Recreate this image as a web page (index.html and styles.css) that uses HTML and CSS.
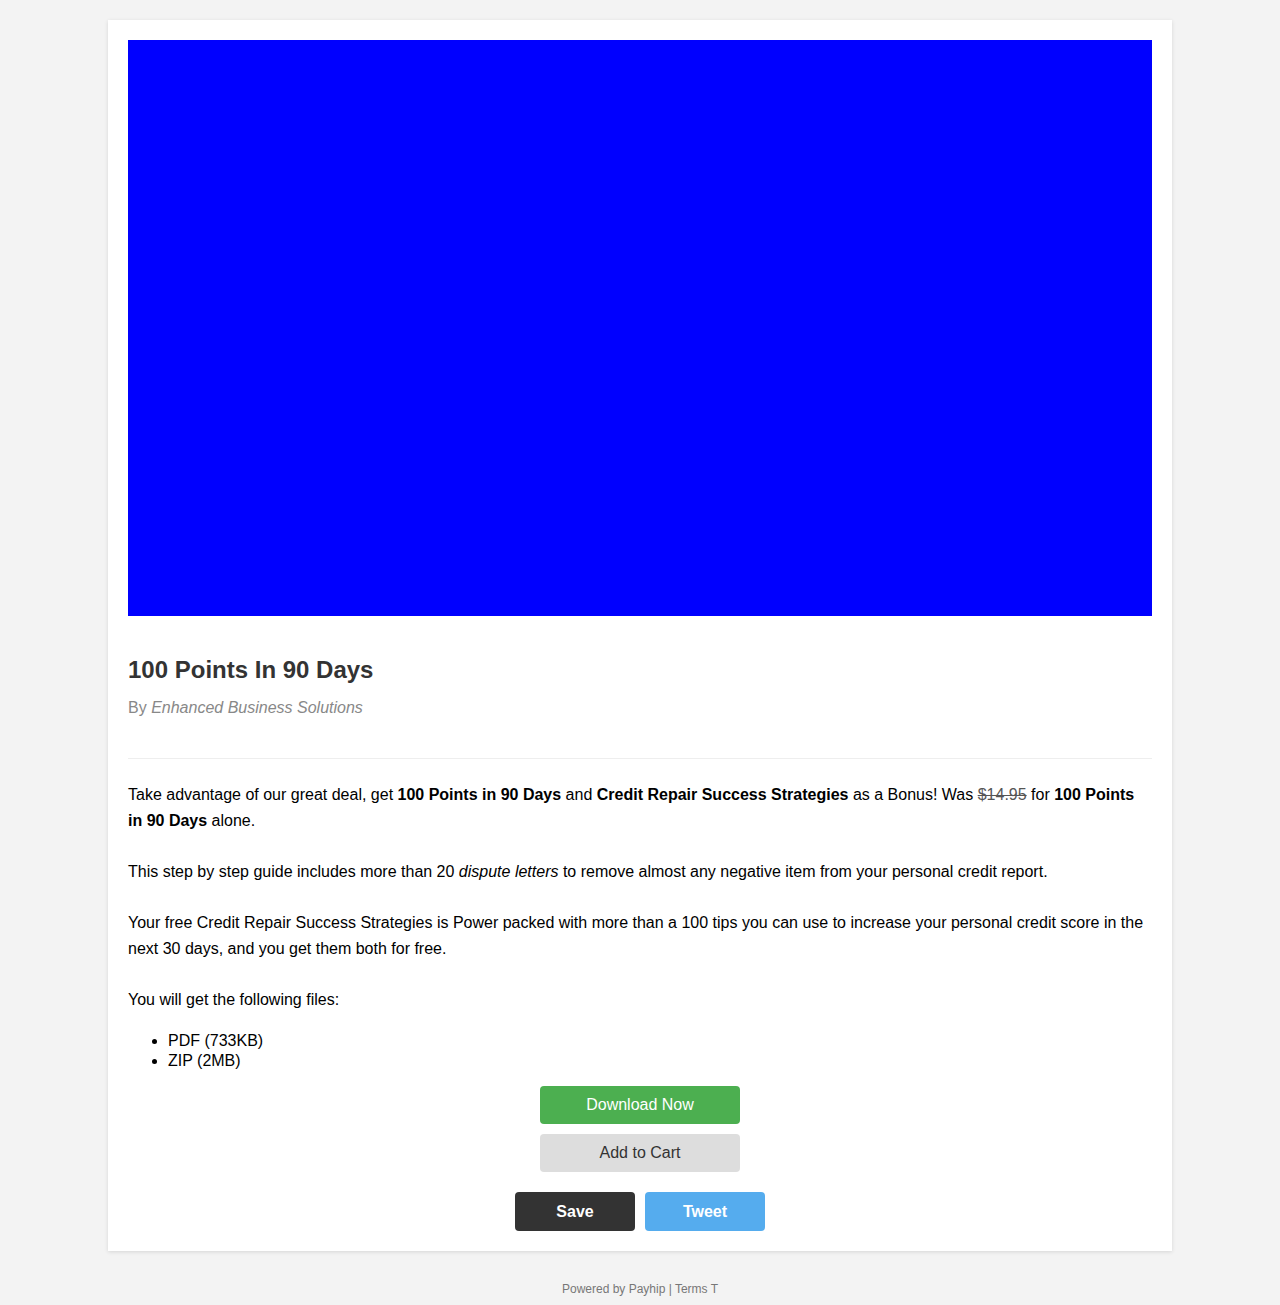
FILE: index.html
```html
<!DOCTYPE html>
<html>
<head>
<meta charset="utf-8">
<link rel="stylesheet" href="styles.css">
</head>
<body>
<div class="page">
  <div class="card">
    <div class="cover"></div>
    <div class="head">
      <h1 class="title">100 Points In 90 Days</h1>
      <div class="byline">By <em>Enhanced Business Solutions</em></div>
    </div>
    <div class="desc">
      <p>Take advantage of our great deal, get <strong>100 Points in 90 Days</strong> and <strong>Credit Repair Success Strategies</strong> as a Bonus! Was <s class="old">$14.95</s> for <strong>100 Points in 90 Days</strong> alone.</p>
      <p>This step by step guide includes more than 20 <em>dispute letters</em> to remove almost any negative item from your personal credit report.</p>
      <p>Your free Credit Repair Success Strategies is Power packed with more than a 100 tips you can use to increase your personal credit score in the next 30 days, and you get them both for free.</p>
      <p class="files-intro">You will get the following files:</p>
      <ul class="files">
        <li>PDF (733KB)</li>
        <li>ZIP (2MB)</li>
      </ul>
    </div>
    <div class="actions">
      <a class="btn btn-buy">Download Now</a>
      <a class="btn btn-cart">Add to Cart</a>
    </div>
    <div class="share">
      <a class="sbtn sbtn-save">Save</a>
      <a class="sbtn sbtn-tweet">Tweet</a>
    </div>
  </div>
  <div class="footer">Powered by Payhip | Terms T</div>
</div>
</body>
</html>
```

FILE: styles.css
```css
html, body {
  margin: 0;
  padding: 0;
  background: #f3f3f3;
  font-family: "Liberation Sans", Arial, sans-serif;
  color: #000;
}
.page {
  padding-top: 20px;
}
.card {
  width: 1024px;
  margin: 0 auto;
  background: #fff;
  padding: 20px;
  box-shadow: 0 1px 4px rgba(0, 0, 0, 0.12);
}
.cover {
  height: 576px;
  background: #0000ff;
}
.head {
  padding-top: 39px;
  padding-bottom: 40px;
  border-bottom: 1px solid #eee;
}
.title {
  margin: 0;
  font-size: 24px;
  line-height: 30px;
  font-weight: bold;
  color: #333;
}
.byline {
  margin-top: 13px;
  font-size: 16px;
  line-height: 20px;
  color: #888;
}
.byline em {
  font-style: italic;
}
.desc {
  padding-top: 23px;
  font-size: 16px;
  line-height: 26px;
}
.desc p {
  margin: 0 0 25px;
}
.desc p.files-intro {
  margin-bottom: 18px;
}
.old {
  color: #555;
}
.files {
  margin: 0;
  padding-left: 40px;
  line-height: 20px;
  font-size: 16px;
}
.actions {
  display: flex;
  flex-direction: column;
  align-items: center;
  gap: 10px;
  margin-top: 15px;
}
.btn {
  display: block;
  width: 200px;
  height: 38px;
  line-height: 38px;
  border-radius: 4px;
  text-align: center;
  font-size: 16px;
}
.btn-buy {
  background: #4caf50;
  color: #fff;
}
.btn-cart {
  background: #ddd;
  color: #333;
}
.share {
  display: flex;
  justify-content: center;
  gap: 10px;
  margin-top: 20px;
}
.sbtn {
  display: block;
  width: 120px;
  height: 39px;
  line-height: 39px;
  border-radius: 4px;
  text-align: center;
  font-size: 16px;
  font-weight: bold;
  color: #fff;
}
.sbtn-save {
  background: #333;
}
.sbtn-tweet {
  background: #55acee;
}
.footer {
  text-align: center;
  font-size: 12px;
  color: #777;
  padding: 31px 0 10px;
}
```
